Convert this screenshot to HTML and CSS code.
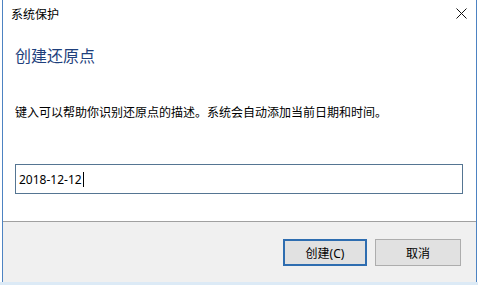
FILE: index.html
```html
<!DOCTYPE html>
<html lang="zh-CN">
  <head>
    <meta charset="UTF-8" />
    <title>系统保护</title>
    <link rel="stylesheet" href="styles.css">
  </head>
  <body>
    <div class="window">
      <div class="titlebar">
        <span class="title">系统保护</span>
        <svg class="close" width="11" height="11" viewBox="0 0 11 11">
          <path d="M0.5 0.5 L10.5 10.5 M10.5 0.5 L0.5 10.5" stroke="#111" stroke-width="1" fill="none" />
        </svg>
      </div>

      <div class="content">
        <h1 class="heading">创建还原点</h1>
        <p class="desc">键入可以帮助你识别还原点的描述。系统会自动添加当前日期和时间。</p>
        <div class="field"><span class="value">2018-12-12</span><span class="caret"></span></div>
      </div>

      <div class="footer">
        <button class="btn btn-default">创建(C)</button>
        <button class="btn">取消</button>
      </div>
    </div>
    <div class="shadow"></div>
  </body>
</html>
```

FILE: styles.css
```css
body {
  margin: 0;
  width: 478px;
  height: 285px;
  overflow: hidden;
  background: #fff;
  font-family: "Noto Sans", "Noto Sans CJK SC", sans-serif;
  font-size: 12px;
  color: #000;
}
.window {
  margin-left: 2px;
  width: 475px;
  height: 282px;
  box-sizing: border-box;
  border-left: 1px solid #4d83c2;
  border-right: 1px solid #4d83c2;
  display: flex;
  flex-direction: column;
  background: #fff;
}
.titlebar {
  height: 30px;
  display: flex;
  align-items: center;
  justify-content: space-between;
  padding: 0 9px 0 8px;
}
.title {
  font-size: 12px;
  line-height: 16px;
}
.close {
  margin-bottom: 3px;
}
.content {
  padding-left: 12px;
}
.heading {
  margin: 16px 0 0;
  font-size: 16px;
  line-height: 20px;
  font-weight: normal;
  color: #1e3f7c;
}
.desc {
  margin: 39px 0 0;
  font-size: 12px;
  line-height: 16px;
}
.field {
  margin-top: 43px;
  width: 448px;
  height: 30px;
  box-sizing: border-box;
  border: 1px solid #557592;
  display: flex;
  align-items: center;
  padding-left: 3px;
  font-size: 12px;
}
.caret {
  display: inline-block;
  width: 1px;
  height: 15px;
  background: #000;
  margin-left: 1px;
}
.footer {
  margin-top: 27px;
  flex: 1;
  border-top: 1px solid #a0a0a0;
  background: #f0f0f0;
  display: flex;
  justify-content: flex-end;
  align-items: flex-start;
  gap: 8px;
  padding: 17px 15px 0 0;
}
.btn {
  width: 86px;
  height: 27px;
  box-sizing: border-box;
  border: 1px solid #adadad;
  background: #e1e1e1;
  font-family: "Noto Sans", "Noto Sans CJK SC", sans-serif;
  font-size: 12px;
  color: #000;
  padding: 0;
}
.btn-default {
  width: 84px;
  border: 2px solid #2e6db0;
}
.shadow {
  height: 3px;
  background: #dceaf6;
}
```
